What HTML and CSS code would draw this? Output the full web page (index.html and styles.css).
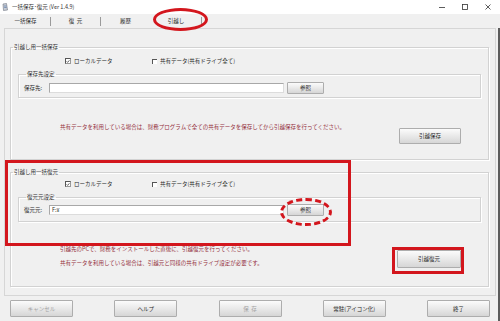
FILE: index.html
```html
<!DOCTYPE html>
<html lang="ja">
<head>
    <meta charset="UTF-8">
    <meta name="viewport" content="width=device-width, initial-scale=1.0">
    <title>一括保存･復元</title>
    <link rel="stylesheet" href="styles.css">
</head>
<body>
    <div class="window">
        <div class="titlebar">
            <svg class="app-icon" width="6" height="8" viewBox="0 0 6 8">
                <path d="M1 1 L4.5 0.5 L5.5 7 L1.5 7.5 Z" fill="#c9ced6" stroke="#6b7280" stroke-width="0.6"/>
                <path d="M2 3 H4.5 M2.2 4.5 H4.6" stroke="#4a6fa5" stroke-width="0.6"/>
            </svg>
            <span class="title">一括保存･復元 (Ver 1.4.9)</span>
            <div class="controls">
                <svg width="8" height="8" viewBox="0 0 8 8"><path d="M1 4.5 H7" stroke="#333" stroke-width="0.8"/></svg>
                <svg width="8" height="8" viewBox="0 0 8 8"><rect x="1.5" y="1.5" width="5" height="5" fill="none" stroke="#333" stroke-width="0.8"/></svg>
                <svg width="8" height="8" viewBox="0 0 8 8"><path d="M1.5 1.5 L6.5 6.5 M6.5 1.5 L1.5 6.5" stroke="#333" stroke-width="0.8"/></svg>
            </div>
        </div>

        <div class="tabs">
            <div class="tab">一括保存</div>
            <div class="tab">復&nbsp;&nbsp;元</div>
            <div class="tab">履歴</div>
            <div class="tab">引越し</div>
        </div>

        <div class="frame">
            <div class="panel">
                <fieldset class="group">
                    <legend>引越し用一括保存</legend>
                    <div class="checks">
                        <label class="check first"><span class="box checked"><svg width="5" height="5" viewBox="0 0 5 5"><path d="M0.8 2.4 L2 3.6 L4.2 1" fill="none" stroke="#222" stroke-width="0.9"/></svg></span>ローカルデータ</label>
                        <label class="check"><span class="box"></span>共有データ(共有ドライブ全て)</label>
                    </div>
                    <fieldset class="inner">
                        <legend>保存先設定</legend>
                        <div class="path-row">
                            <span class="path-label">保存先:</span>
                            <div class="input"></div>
                            <button class="btn browse">参照</button>
                        </div>
                    </fieldset>
                    <div class="note-row save-row">
                        <p class="note">共有データを利用している場合は、財務プログラムで全ての共有データを保存してから引越保存を行ってください。</p>
                        <button class="btn action">引越保存</button>
                    </div>
                </fieldset>

                <fieldset class="group second">
                    <legend>引越し用一括復元</legend>
                    <div class="checks">
                        <label class="check first"><span class="box checked"><svg width="5" height="5" viewBox="0 0 5 5"><path d="M0.8 2.4 L2 3.6 L4.2 1" fill="none" stroke="#222" stroke-width="0.9"/></svg></span>ローカルデータ</label>
                        <label class="check"><span class="box"></span>共有データ(共有ドライブ全て)</label>
                    </div>
                    <fieldset class="inner">
                        <legend>復元元設定</legend>
                        <div class="path-row">
                            <span class="path-label">復元元:</span>
                            <div class="input">F:¥</div>
                            <button class="btn browse">参照</button>
                        </div>
                    </fieldset>
                    <div class="note-row restore-row">
                        <div class="notes">
                            <p class="note">引越先のPCで、財務をインストールした直後に、引越復元を行ってください。</p>
                            <p class="note">共有データを利用している場合は、引越元と同様の共有ドライブ設定が必要です。</p>
                        </div>
                        <button class="btn action tall">引越復元</button>
                    </div>
                </fieldset>
            </div>

            <div class="footer">
                <button class="btn foot" disabled>キャンセル</button>
                <button class="btn foot">ヘルプ</button>
                <button class="btn foot" disabled>保&nbsp;&nbsp;存</button>
                <button class="btn foot">常駐(アイコン化)</button>
                <button class="btn foot">終了</button>
            </div>
        </div>

        <!-- annotations drawn over the screenshot -->
        <div class="mark tab-circle"></div>
        <div class="mark restore-box"></div>
        <div class="mark browse-circle"></div>
        <div class="mark button-box"></div>
    </div>
</body>
</html>
```

FILE: styles.css
```css
* {
    box-sizing: border-box;
}
body {
    margin: 0;
    background-color: #f0f0f0;
    font-family: "Noto Sans CJK JP", "Liberation Sans", sans-serif;
    font-size: 5.5px;
    color: #2a2a2a;
}
.window {
    position: relative;
    width: 500px;
    height: 321px;
    display: flex;
    flex-direction: column;
    overflow: hidden;
}
.titlebar {
    height: 14px;
    background: white;
    display: flex;
    align-items: center;
    padding-left: 2px;
}
.app-icon {
    margin-right: 4px;
}
.title {
    line-height: 8px;
    color: #333;
}
.controls {
    margin-left: auto;
    display: flex;
    gap: 15px;
    padding-right: 8px;
}
.tabs {
    height: 14px;
    display: flex;
    align-items: center;
    padding-left: 1px;
}
.tab {
    width: 50px;
    line-height: 9px;
    text-align: center;
    border-right: 1px solid #9a9a9a;
}
.tab:nth-child(3) {
    border-right-color: transparent;
}
.tab:last-child {
    width: 51px;
}
.frame {
    flex: 1;
    display: flex;
    flex-direction: column;
    border-right: 2px solid #5c5c5c;
}
.panel {
    margin: 0 2px 0 4px;
    border: 1px solid #d6d6d6;
    padding: 14px 6px 8px 5px;
}
fieldset {
    margin: 0;
    padding: 0;
    min-width: 0;
    border: 1px solid #d2d2d2;
    box-shadow: 1px 1px 0 #fff, inset 1px 1px 0 #fff;
}
legend {
    line-height: 8px;
    padding: 0 1px;
    margin-left: 2px;
    color: #333;
}
.group {
    padding-bottom: 15px;
}
.group.second {
    margin-top: 8px;
    padding-bottom: 16px;
}
.checks {
    display: flex;
    align-items: center;
    margin-top: 6px;
    padding-left: 54px;
    line-height: 8px;
}
.second .checks {
    margin-top: 4px;
}
.check {
    display: flex;
    align-items: center;
    gap: 3px;
}
.check.first {
    width: 87px;
}
.box {
    width: 5px;
    height: 5px;
    background: white;
    border-top: 1px solid #555;
    border-left: 1px solid #555;
    display: flex;
}
.box.checked {
    width: 6px;
    height: 6px;
    border: 1px solid #555;
    border-right-color: #999;
    border-bottom-color: #999;
    align-items: center;
    justify-content: center;
}
.inner {
    margin: 5px 7px 0 7px;
    padding: 4px 0 3px 5px;
}
.second .inner {
    padding: 3px 0 5px 5px;
}
.path-row {
    display: flex;
    align-items: center;
    height: 12px;
}
.path-label {
    width: 25px;
    line-height: 8px;
}
.input {
    width: 235px;
    height: 10px;
    background: white;
    border: 1px solid #a8a8a8;
    border-bottom-color: #dcdcdc;
    border-right-color: #dcdcdc;
    line-height: 8px;
    padding-left: 2px;
}
.btn {
    font-family: inherit;
    font-size: 5.5px;
    color: #2a2a2a;
    padding: 0;
    border: 1px solid #adadad;
    border-radius: 1px;
    background: linear-gradient(#fbfbfb, #e9e9e9 50%, #d6d6d6);
    cursor: pointer;
}
.btn:disabled {
    color: #a3a3a3;
    cursor: default;
}
.browse {
    width: 37px;
    height: 12px;
    margin-left: 3px;
}
.note-row {
    display: flex;
    align-items: flex-start;
}
.save-row {
    margin-top: 25px;
}
.restore-row {
    margin-top: 20px;
}
.note {
    margin: 0;
    padding-left: 49px;
    line-height: 8px;
    color: #953040;
}
.notes .note {
    line-height: 14px;
}
.action {
    width: 62px;
    height: 16px;
    margin: 5px 27px 0 auto;
}
.action.tall {
    width: 64px;
    height: 18px;
    margin-top: 8px;
}
.footer {
    display: flex;
    justify-content: space-between;
    padding: 4px 8px 0 10px;
}
.foot {
    width: 63px;
    height: 17px;
}
.mark {
    position: absolute;
    border: 3px solid #d3161d;
}
.tab-circle {
    left: 153px;
    top: 8px;
    width: 55px;
    height: 23px;
    border-radius: 50%;
}
.restore-box {
    left: 5px;
    top: 160px;
    width: 346px;
    height: 86px;
}
.browse-circle {
    left: 280px;
    top: 198px;
    width: 52px;
    height: 28px;
    border-style: dashed;
    border-radius: 50%;
}
.button-box {
    left: 392px;
    top: 247px;
    width: 72px;
    height: 27px;
}
```
